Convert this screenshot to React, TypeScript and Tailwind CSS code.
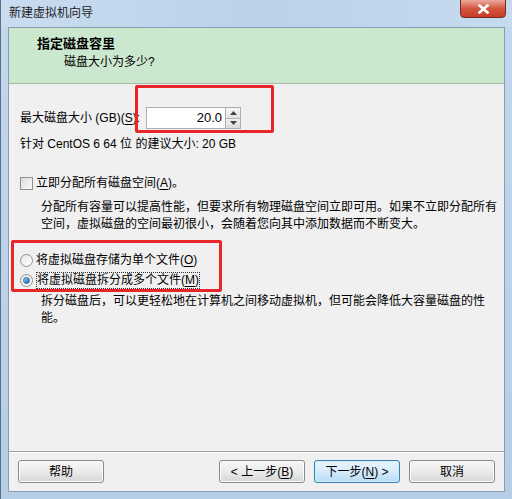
const font = { fontFamily: '"Liberation Sans", "Noto Sans CJK SC", sans-serif' };

function Key({ k }: { k: string }) {
  return <span className="underline underline-offset-2">{k}</span>;
}

function WinButton({ children, primary }: { children: React.ReactNode; primary?: boolean }) {
  return (
    <div
      className={
        'w-[86px] h-[23px] rounded-[3px] border flex items-center justify-center text-[12px] leading-none text-black ' +
        (primary
          ? 'border-[#3c7fb1] bg-gradient-to-b from-[#e9f5fd] via-[#d6ecfb] to-[#b6dcf5] shadow-[inset_0_0_0_1px_#cdeefc]'
          : 'border-[#8a8a8a] bg-gradient-to-b from-[#f6f6f6] via-[#ebebeb] to-[#d6d6d6] shadow-[inset_0_0_0_1px_#fcfcfc]')
      }
    >
      {children}
    </div>
  );
}

function Radio({ checked }: { checked?: boolean }) {
  return (
    <div className="w-[13px] h-[13px] rounded-full border border-[#8e8f8f] bg-gradient-to-br from-[#e6e6e6] to-[#ffffff] flex items-center justify-center shrink-0">
      {checked && <div className="w-[7px] h-[7px] rounded-full bg-gradient-to-br from-[#8fd1f7] to-[#1a5fa6] border border-[#2a6aa8]" />}
    </div>
  );
}

export default function App() {
  return (
    <div className="w-[512px] h-[499px] overflow-hidden flex flex-col bg-gradient-to-b from-[#c3d8ee] to-[#b5cde6] border-l border-[#5a6e86]" style={font}>
      {/* title bar */}
      <div className="h-[27px] flex items-start justify-between pl-[8px] pr-[6px] bg-gradient-to-r from-[#c9dcf0] via-[#bcd2ea] to-[#c6daef]">
        <span className="text-[12px] leading-[16px] mt-[5px] text-[#1e1e1e]">新建虚拟机向导</span>
        <div className="w-[46px] h-[19px] -mt-[1px] rounded-b-[4px] border border-[#7b2a20] bg-gradient-to-b from-[#e9a99c] via-[#d2553f] to-[#c63c26] flex items-center justify-center">
          <svg width="11" height="10" viewBox="0 0 11 10">
            <path d="M1.5 1.5 L9.5 8.5 M9.5 1.5 L1.5 8.5" stroke="#fff" strokeWidth="2.6" strokeLinecap="square" />
          </svg>
        </div>
      </div>

      {/* client area */}
      <div className="mx-[7px] flex-1 flex flex-col bg-[#f0f0f0] border border-[#8a9bb0] relative">
        {/* header */}
        <div className="h-[56px] bg-[#cbe7cd] border-b border-[#a8b8a8] pl-[28px] pt-[7px]">
          <div className="text-[13px] leading-[18px] font-bold text-black">指定磁盘容里</div>
          <div className="text-[12px] leading-[16px] text-black pl-[27px] mt-[1px]">磁盘大小为多少?</div>
        </div>

        {/* body */}
        <div className="flex-1 flex flex-col pl-[11px] pr-[8px] text-[12px] text-black">
          <div className="mt-[23px] h-[22px] flex items-center">
            <span className="leading-[16px] w-[126px]">
              最大磁盘大小 (GB)(<Key k="S" />):
            </span>
            <div className="w-[80px] h-[22px] bg-white border border-[#abadb3] flex items-center justify-end pr-[3px] text-[13px]">20.0</div>
            <div className="w-[15px] h-[22px] flex flex-col border border-l-0 border-[#abadb3]">
              <div className="flex-1 flex items-center justify-center bg-gradient-to-b from-[#f7f7f7] to-[#e2e2e2] border-b border-[#b5b5b5]">
                <svg width="7" height="4" viewBox="0 0 7 4"><path d="M0 4 L3.5 0 L7 4 Z" fill="#444" /></svg>
              </div>
              <div className="flex-1 flex items-center justify-center bg-gradient-to-b from-[#f0f0f0] to-[#dcdcdc]">
                <svg width="7" height="4" viewBox="0 0 7 4"><path d="M0 0 L3.5 4 L7 0 Z" fill="#444" /></svg>
              </div>
            </div>
          </div>

          <div className="mt-[7px] leading-[16px]">针对 CentOS 6 64 位 的建议大小: 20 GB</div>

          <div className="mt-[23px] h-[16px] flex items-center gap-[3px]">
            <div className="w-[13px] h-[13px] border border-[#8e8f8f] bg-gradient-to-br from-[#dcdcdc] to-[#fafafa] shrink-0" />
            <span className="leading-[16px]">
              立即分配所有磁盘空间(<Key k="A" />)。
            </span>
          </div>
          <div className="mt-[8px] pl-[21px] leading-[17px] whitespace-nowrap">
            分配所有容量可以提高性能，但要求所有物理磁盘空间立即可用。如果不立即分配所有
            <br />
            空间，虚拟磁盘的空间最初很小，会随着您向其中添加数据而不断变大。
          </div>

          <div className="mt-[17px] h-[20px] flex items-center gap-[3px]">
            <Radio />
            <span className="leading-[16px]">
              将虚拟磁盘存储为单个文件(<Key k="O" />)
            </span>
          </div>
          <div className="h-[20px] flex items-center gap-[3px]">
            <Radio checked />
            <span className="leading-[15px] border border-dotted border-[#333]">
              将虚拟磁盘拆分成多个文件(<Key k="M" />)
            </span>
          </div>
          <div className="mt-[3px] pl-[21px] leading-[17px] whitespace-nowrap">
            拆分磁盘后，可以更轻松地在计算机之间移动虚拟机，但可能会降低大容量磁盘的性
            <br />
            能。
          </div>

          <div className="flex-1" />
        </div>

        {/* footer */}
        <div className="border-t border-[#a0a0a0] shadow-[inset_0_1px_0_#ffffff] h-[40px] flex items-start pt-[8px] px-[9px]">
          <WinButton>帮助</WinButton>
          <div className="flex-1" />
          <div className="flex gap-[9px]">
            <WinButton>
              &lt; 上一步(<Key k="B" />)
            </WinButton>
            <WinButton primary>
              下一步(<Key k="N" />) &gt;
            </WinButton>
            <WinButton>取消</WinButton>
          </div>
        </div>

        {/* red annotation boxes */}
        <div className="absolute left-[126px] top-[57px] w-[139px] h-[48px] border-[3px] border-[#e8262a] rounded-[2px] pointer-events-none" />
        <div className="absolute left-[2px] top-[212px] w-[211px] h-[52px] border-[3px] border-[#e8262a] rounded-[2px] pointer-events-none" />
      </div>

      <div className="h-[7px]" />
    </div>
  );
}
